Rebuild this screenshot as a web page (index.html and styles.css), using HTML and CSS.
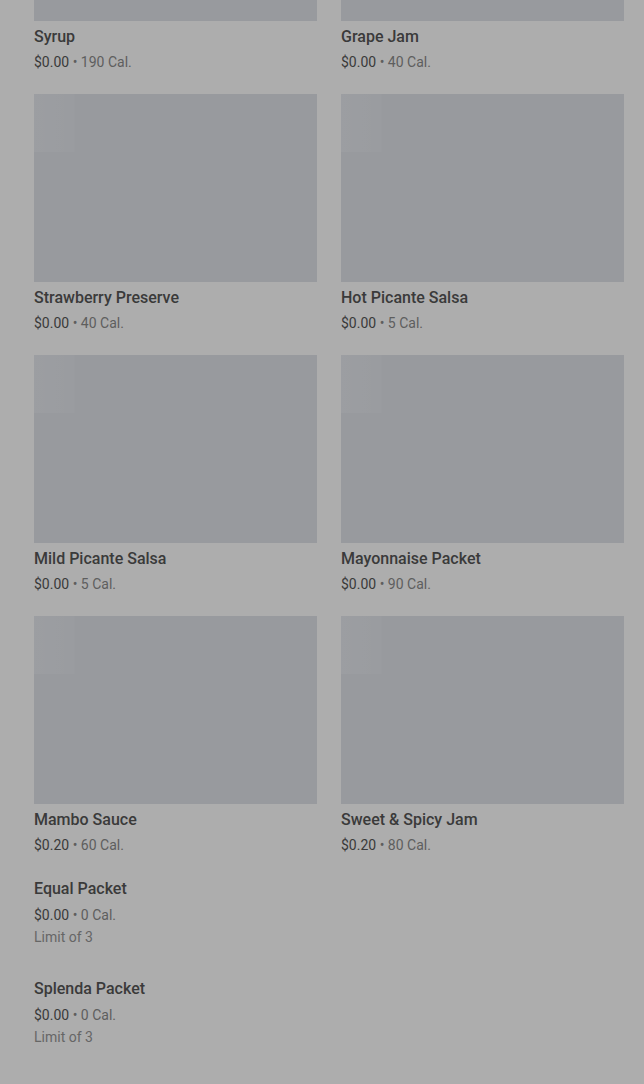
FILE: index.html
```html
<!DOCTYPE html>
<html lang="en">
<head>
    <meta charset="UTF-8">
    <meta name="viewport" content="width=device-width, initial-scale=1.0">
    <title>Condiments</title>
    <link rel="stylesheet" href="styles.css">
</head>
<body>
    <div class="menu">
        <div class="grid">
            <div class="item">
                <div class="thumb"></div>
                <div class="name">Syrup</div>
                <div class="meta"><span class="price">$0.00</span> • 190 Cal.</div>
            </div>
            <div class="item">
                <div class="thumb"></div>
                <div class="name">Grape Jam</div>
                <div class="meta"><span class="price">$0.00</span> • 40 Cal.</div>
            </div>
            <div class="item">
                <div class="thumb"></div>
                <div class="name">Strawberry Preserve</div>
                <div class="meta"><span class="price">$0.00</span> • 40 Cal.</div>
            </div>
            <div class="item">
                <div class="thumb"></div>
                <div class="name">Hot Picante Salsa</div>
                <div class="meta"><span class="price">$0.00</span> • 5 Cal.</div>
            </div>
            <div class="item">
                <div class="thumb"></div>
                <div class="name">Mild Picante Salsa</div>
                <div class="meta"><span class="price">$0.00</span> • 5 Cal.</div>
            </div>
            <div class="item">
                <div class="thumb"></div>
                <div class="name">Mayonnaise Packet</div>
                <div class="meta"><span class="price">$0.00</span> • 90 Cal.</div>
            </div>
            <div class="item">
                <div class="thumb"></div>
                <div class="name">Mambo Sauce</div>
                <div class="meta"><span class="price">$0.20</span> • 60 Cal.</div>
            </div>
            <div class="item">
                <div class="thumb"></div>
                <div class="name">Sweet &amp; Spicy Jam</div>
                <div class="meta"><span class="price">$0.20</span> • 80 Cal.</div>
            </div>
        </div>

        <div class="list">
            <div class="row">
                <div class="name">Equal Packet</div>
                <div class="meta"><span class="price">$0.00</span> • 0 Cal.</div>
                <div class="limit">Limit of 3</div>
            </div>
            <div class="row">
                <div class="name">Splenda Packet</div>
                <div class="meta"><span class="price">$0.00</span> • 0 Cal.</div>
                <div class="limit">Limit of 3</div>
            </div>
        </div>
    </div>
</body>
</html>
```

FILE: styles.css
```css
html, body {
    margin: 0;
    background-color: #adadad;
    color: #3a3a3a;
    font-family: 'Roboto', 'Inter', sans-serif;
    overflow: hidden;
}
.menu {
    padding: 0 20px 0 34px;
    margin-top: -167px;
}
.grid {
    display: grid;
    grid-template-columns: 1fr 1fr;
    column-gap: 24px;
    row-gap: 22px;
}
.item {
    display: flex;
    flex-direction: column;
}
.thumb {
    height: 188px;
    background-color: #989a9e;
    background-image: linear-gradient(90deg, rgba(255, 255, 255, 0.04) 0, rgba(255, 255, 255, 0.02) 40px, rgba(255, 255, 255, 0) 41px);
    background-size: 100% 58px;
    background-repeat: no-repeat;
}
.name {
    margin-top: 6px;
    font-size: 16px;
    line-height: 20px;
    font-weight: 500;
    color: #3a3a3a;
}
.meta {
    margin-top: 5px;
    font-size: 14px;
    line-height: 20px;
    color: #5e5e5e;
}
.price {
    color: #3a3a3a;
}
.list {
    margin-top: 24px;
}
.row {
    padding-bottom: 26px;
}
.row .meta {
    margin-top: 6px;
}
.limit {
    margin-top: 2px;
    font-size: 14px;
    line-height: 20px;
    color: #666666;
}
```
